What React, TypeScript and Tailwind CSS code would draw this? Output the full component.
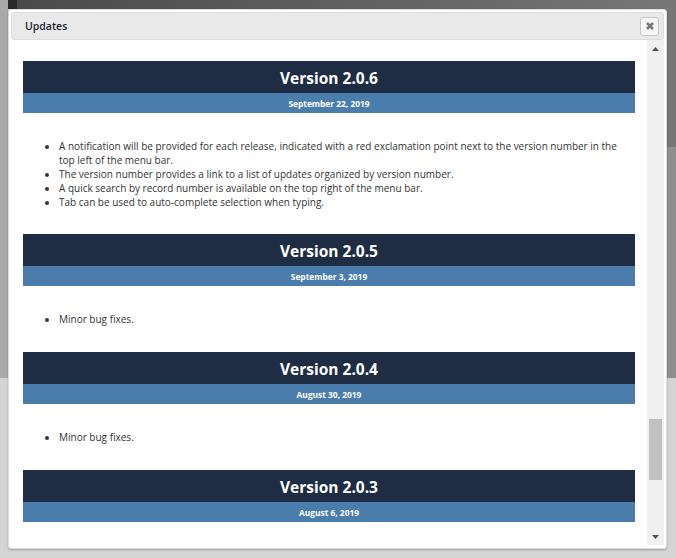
import React from 'react';

type Release = { version: string; date: string; notes: string[] };

const RELEASES: Release[] = [
  {
    version: '2.0.6',
    date: 'September 22, 2019',
    notes: [
      'A notification will be provided for each release, indicated with a red exclamation point next to the version number in the top left of the menu bar.',
      'The version number provides a link to a list of updates organized by version number.',
      'A quick search by record number is available on the top right of the menu bar.',
      'Tab can be used to auto-complete selection when typing.',
    ],
  },
  { version: '2.0.5', date: 'September 3, 2019', notes: ['Minor bug fixes.'] },
  { version: '2.0.4', date: 'August 30, 2019', notes: ['Minor bug fixes.'] },
  { version: '2.0.3', date: 'August 6, 2019', notes: ['Minor bug fixes.'] },
];

function ReleaseBlock({ r, first }: { r: Release; first: boolean }) {
  return (
    <div>
      <div className="h-[32px] pt-[3px] bg-[#1f2d44] flex items-center justify-center text-white font-bold text-[15.5px]">
        Version {r.version}
      </div>
      <div className="h-[20px] pt-[2px] bg-[#4a7dab] flex items-center justify-center text-white font-bold text-[8.4px]">
        {r.date}
      </div>
      <ul
        className={`list-disc mt-[26px] pl-[36px] text-[10px] leading-[14px] text-[#333] ${
          first ? 'mb-[25px]' : 'mb-[26px]'
        }`}
      >
        {r.notes.map((n) => (
          <li key={n}>{n}</li>
        ))}
      </ul>
    </div>
  );
}

export default function App() {
  return (
    <div
      className="relative w-[676px] h-[558px] overflow-hidden bg-[#d4d4d4]"
      style={{ fontFamily: '"Open Sans", "Liberation Sans", sans-serif' }}
    >
      {/* page behind the modal */}
      <div className="h-[378px] flex">
        <div className="w-[8px] bg-[#a9a9a9]" />
        <div className="w-[9px] h-[9px] bg-[#2a2a2a]" />
        <div className="flex-1 bg-gradient-to-r from-[#4a4a4a] via-[#606060] to-[#777]" />
      </div>
      <div className="absolute right-0 top-[147px] w-[12px] h-[231px] bg-[#8e8e8e]" />
      <div className="absolute left-[650px] top-[84px] text-white font-bold text-[40px] leading-none">t</div>

      {/* dialog */}
      <div className="absolute left-[8px] top-[9px] w-[659px] h-[540px] bg-white border border-[#dddddd] rounded-[3px] shadow-[0_1px_2px_rgba(0,0,0,0.25)] flex flex-col p-[2px]">
        <div className="h-[28px] shrink-0 bg-[#e9e9e9] border border-[#dddddd] rounded-[3px] flex items-center justify-between pl-[13px] pr-[4px]">
          <span className="pt-[1px] text-[10.5px] font-semibold text-[#1c2636]">Updates</span>
          <div className="w-[19px] h-[19px] border border-[#c5c5c5] bg-[#f6f6f6] rounded-[3px] flex items-center justify-center">
            <svg width="10" height="10" viewBox="0 0 10 10">
              <path d="M2 2 L8 8 M8 2 L2 8" stroke="#7a7a7a" strokeWidth="2.6" />
            </svg>
          </div>
        </div>
        <div className="flex-1 flex min-h-0 -mx-[2px]">
          <div className="flex-1 overflow-hidden pl-[14px] pr-[12px] pt-[21px]">
            {RELEASES.map((r, i) => (
              <ReleaseBlock key={r.version} r={r} first={i === 0} />
            ))}
          </div>
          <div className="w-[17px] bg-[#f0f0f0] flex flex-col items-center mr-[2px] mb-[1px]">
            <div className="h-[17px] flex items-center justify-center">
              <svg width="7" height="4" viewBox="0 0 7 4">
                <path d="M3.5 0 L7 4 L0 4 Z" fill="#505050" />
              </svg>
            </div>
            <div className="flex-1 w-full flex flex-col px-[2px]">
              <div className="h-[362px]" />
              <div className="h-[61px] bg-[#c1c1c1]" />
            </div>
            <div className="h-[17px] flex items-center justify-center">
              <svg width="7" height="4" viewBox="0 0 7 4">
                <path d="M0 0 L7 0 L3.5 4 Z" fill="#505050" />
              </svg>
            </div>
          </div>
        </div>
      </div>
    </div>
  );
}
